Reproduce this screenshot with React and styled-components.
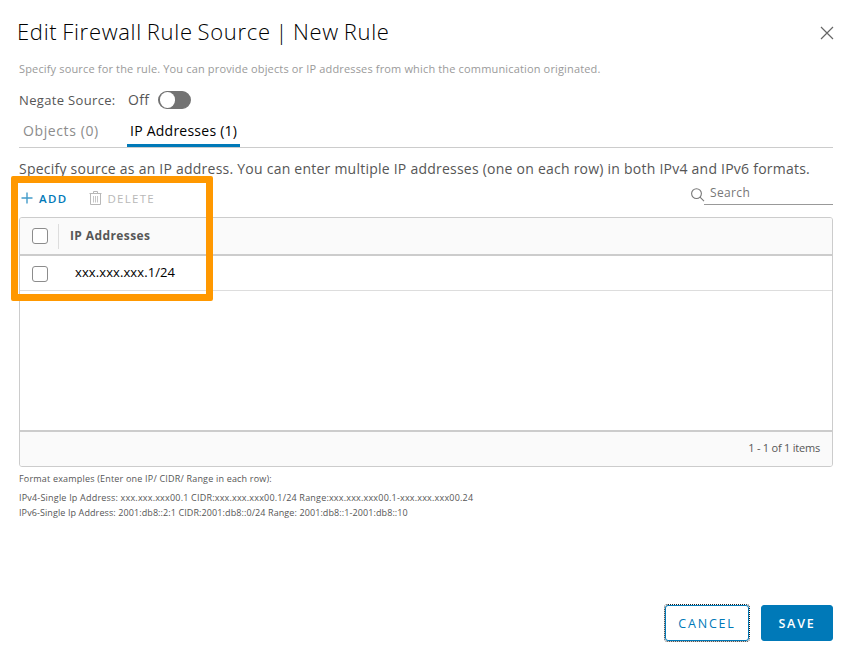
import React from "react";
import styled, { createGlobalStyle } from "styled-components";

const GlobalStyle = createGlobalStyle`
  *, *::before, *::after { box-sizing: border-box; }
  body { margin: 0; background: #fff; }
  button, input { font-family: inherit; padding: 0; margin: 0; }
`;

const Dialog = styled.main`
  position: relative;
  display: flex;
  flex-direction: column;
  width: 853px;
  height: 660px;
  padding: 19px 20px 19px 19px;
  background: #fff;
  color: #565656;
  font-family: "Open Sans", "Noto Sans", sans-serif;
  white-space: nowrap;
`;

const Header = styled.header`
  display: flex;
  justify-content: space-between;
  align-items: center;
  height: 28px;
`;

const Title = styled.h1`
  margin: -4px 0 0 -2px;
  font-size: 22px;
  line-height: 28px;
  font-weight: 350;
  letter-spacing: 0.7px;
  word-spacing: -1.6px;
  color: #000;
`;

const CloseButton = styled.button`
  display: flex;
  width: 14px;
  height: 14px;
  margin-right: -1px;
  border: 0;
  background: none;
  color: #666;
`;

const Subtitle = styled.p`
  margin: 14px 0 0;
  font-size: 11px;
  line-height: 16px;
  letter-spacing: 0.155px;
  color: #9a9a9a;
`;

const NegateRow = styled.div`
  display: flex;
  align-items: center;
  height: 18px;
  margin-top: 14px;
`;

const NegateLabel = styled.span`
  width: 109px;
  margin-top: -1px;
  font-size: 13px;
  letter-spacing: 0.34px;
`;

const NegateValue = styled.span`
  width: 30px;
  margin-top: -1px;
  font-size: 14px;
  letter-spacing: 0.3px;
`;

const Toggle = styled.button`
  display: flex;
  width: 33px;
  height: 18px;
  border: 2px solid #737373;
  border-width: 1px 2px;
  border-radius: 9px;
  background: #737373;

  &::before {
    content: "";
    width: 15px;
    height: 16px;
    border-radius: 8px;
    background: #fff;
  }
`;

const Tabs = styled.nav`
  display: flex;
  gap: 24px;
  height: 39px;
  border-bottom: 1px solid #ccc;
`;

const Tab = styled.button`
  display: flex;
  align-items: center;
  width: ${(p) => (p.$active ? 113 : 84)}px;
  height: 38px;
  padding: 6px 0 1px ${(p) => (p.$active ? 3 : 4)}px;
  border: 0;
  background: none;
  box-shadow: ${(p) => (p.$active ? "inset 0 -3px 0 #0079b8" : "none")};
  color: ${(p) => (p.$active ? "#000" : "#8c8c8c")};
  font-size: 14px;
  letter-spacing: ${(p) => (p.$active ? 0.24 : 0.6)}px;
`;

const Hint = styled.p`
  margin: 11px 0 0;
  font-size: 14px;
  line-height: 20px;
  letter-spacing: 0.235px;
`;

const Toolbar = styled.div`
  display: flex;
  align-items: flex-start;
  height: 38px;
`;

const Action = styled.button`
  display: flex;
  align-items: center;
  gap: ${(p) => (p.$primary ? 6 : 5)}px;
  height: 16px;
  margin: 11px 0 0 ${(p) => (p.$primary ? 2 : 22)}px;
  border: 0;
  background: none;
  color: ${(p) => (p.$primary ? "#0079b8" : "#b8b8b8")};
  font-size: 11.5px;
  font-weight: ${(p) => (p.$primary ? 600 : 400)};
  letter-spacing: 1.3px;
`;

const SearchBox = styled.label`
  display: flex;
  align-items: flex-start;
  margin-left: auto;
  color: #777;
`;

const SearchIcon = styled.svg`
  width: 14px;
  height: 14px;
  margin-top: 9px;
  overflow: visible;
`;

const SearchInput = styled.input`
  width: 129px;
  height: 26px;
  padding: 2px 6px 0 6px;
  border: 0;
  border-bottom: 1px solid #999;
  outline: none;
  background: none;
  color: #777;
  font-size: 12px;
  letter-spacing: 0.35px;

  &::placeholder { color: #777; opacity: 1; }
`;

const Grid = styled.section`
  display: flex;
  flex-direction: column;
  height: 250px;
  border: 1px solid #ccc;
  border-radius: 3px;
  overflow: hidden;
`;

const GridHeader = styled.div`
  display: flex;
  align-items: center;
  height: 38px;
  padding-left: 12px;
  border-bottom: 2px solid #ccc;
  background: #fafafa;
`;

const GridRow = styled.div`
  display: flex;
  align-items: center;
  height: 35px;
  padding: 2px 0 0 12px;
  border-bottom: 1px solid #ddd;
`;

const Checkbox = styled.input.attrs({ type: "checkbox" })`
  appearance: none;
  width: 16px;
  height: 16px;
  border: 1px solid #8c8c8c;
  border-radius: 3px;
  background: #fff;
`;

const ColumnTitle = styled.span`
  display: flex;
  align-items: center;
  height: 25px;
  margin-left: 10px;
  padding: 0 0 2px 11px;
  border-left: 1px solid #ddd;
  font-size: 12px;
  font-weight: 700;
  letter-spacing: 0.4px;
`;

const Address = styled.span`
  margin: -5px 0 0 27px;
  color: #000;
  font-size: 13px;
  letter-spacing: 0.1px;
`;

const GridFooter = styled.footer`
  display: flex;
  align-items: center;
  justify-content: flex-end;
  height: 36px;
  margin-top: auto;
  padding: 0 12px 3px 0;
  border-top: 2px solid #ccc;
  background: #fafafa;
  font-size: 11px;
  letter-spacing: -0.22px;
`;

const Examples = styled.div`
  margin-top: 4px;
  font-size: 9px;
  line-height: 15px;
`;

const ExampleTitle = styled.p`
  margin: 0 0 4px;
  letter-spacing: 0.19px;
`;

const Example = styled.p`
  margin: 0;
  letter-spacing: ${(p) => (p.$v6 ? 0.1 : 0.2)}px;
`;

const Actions = styled.footer`
  display: flex;
  justify-content: flex-end;
  gap: 12px;
  margin-top: auto;
`;

const Button = styled.button`
  width: ${(p) => (p.$primary ? 72 : 84)}px;
  height: 36px;
  border: 1px solid #0079b8;
  border-radius: 3px;
  outline: ${(p) => (p.$primary ? "none" : "1px dotted #222")};
  background: ${(p) => (p.$primary ? "#0079b8" : "#fff")};
  color: ${(p) => (p.$primary ? "#fff" : "#0079b8")};
  font-size: 12.5px;
  font-weight: ${(p) => (p.$primary ? 600 : 500)};
  letter-spacing: 1.8px;
`;

const Highlight = styled.div`
  position: absolute;
  left: 11px;
  top: 176px;
  width: 202px;
  height: 125px;
  border: 7px solid #ff9800;
  border-radius: 2px;
  pointer-events: none;
`;

export default function App() {
  return (
    <>
      <GlobalStyle />
      <Dialog>
        <Header>
          <Title>Edit Firewall Rule Source | New Rule</Title>
          <CloseButton aria-label="Close">
            <svg width="14" height="14" viewBox="0 0 14 14" fill="none" stroke="currentColor" strokeWidth="1.2">
              <path d="M1 1l12 12M13 1L1 13" />
            </svg>
          </CloseButton>
        </Header>
        <Subtitle>
          Specify source for the rule. You can provide objects or IP addresses from which the communication originated.
        </Subtitle>
        <NegateRow>
          <NegateLabel>Negate Source:</NegateLabel>
          <NegateValue>Off</NegateValue>
          <Toggle role="switch" aria-checked="false" aria-label="Negate Source" />
        </NegateRow>
        <Tabs>
          <Tab>Objects (0)</Tab>
          <Tab $active>IP Addresses (1)</Tab>
        </Tabs>
        <Hint>
          Specify source as an IP address. You can enter multiple IP addresses (one on each row) in both IPv4 and IPv6 formats.
        </Hint>
        <Toolbar>
          <Action $primary>
            <svg width="12" height="12" viewBox="0 0 12 12" fill="none" stroke="#439cca" strokeWidth="1.4">
              <path d="M6 .5v11M.5 6h11" />
            </svg>
            ADD
          </Action>
          <Action>
            <svg width="13" height="14" viewBox="0 0 13 14" fill="none" stroke="currentColor" strokeWidth="1">
              <path d="M.5 2.5h12M4.5 2.5v-2h4v2M1.5 3v10.5h10V3" />
              <path d="M4.5 5v6.5M6.5 5v6.5M8.5 5v6.5" strokeWidth=".8" />
            </svg>
            DELETE
          </Action>
          <SearchBox>
            <SearchIcon viewBox="0 0 14 14" fill="none" stroke="currentColor" strokeWidth="1.1">
              <circle cx="6.5" cy="5.6" r="4.9" />
              <path d="M10 9.2l4 4" />
            </SearchIcon>
            <SearchInput placeholder="Search" />
          </SearchBox>
        </Toolbar>
        <Grid>
          <GridHeader>
            <Checkbox aria-label="Select all" />
            <ColumnTitle>IP Addresses</ColumnTitle>
          </GridHeader>
          <GridRow>
            <Checkbox aria-label="Select row" />
            <Address>xxx.xxx.xxx.1/24</Address>
          </GridRow>
          <GridFooter>1 - 1 of 1 items</GridFooter>
        </Grid>
        <Examples>
          <ExampleTitle>Format examples (Enter one IP/ CIDR/ Range in each row):</ExampleTitle>
          <Example>
            IPv4-Single Ip Address: xxx.xxx.xxx00.1 CIDR:xxx.xxx.xxx00.1/24 Range:xxx.xxx.xxx00.1-xxx.xxx.xxx00.24
          </Example>
          <Example $v6>
            IPv6-Single Ip Address: 2001:db8::2:1 CIDR:2001:db8::0/24 Range: 2001:db8::1-2001:db8::10
          </Example>
        </Examples>
        <Actions>
          <Button>CANCEL</Button>
          <Button $primary>SAVE</Button>
        </Actions>
        <Highlight />
      </Dialog>
    </>
  );
}
